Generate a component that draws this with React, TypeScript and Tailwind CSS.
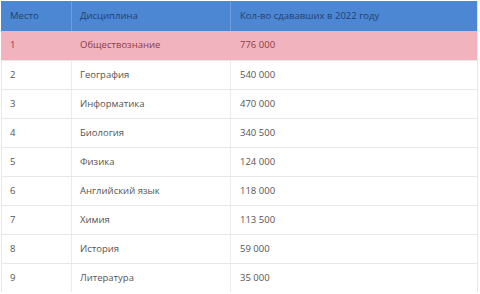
import React from 'react';

const rows: [string, string, string][] = [
  ['1', 'Обществознание', '776 000'],
  ['2', 'География', '540 000'],
  ['3', 'Информатика', '470 000'],
  ['4', 'Биология', '340 500'],
  ['5', 'Физика', '124 000'],
  ['6', 'Английский язык', '118 000'],
  ['7', 'Химия', '113 500'],
  ['8', 'История', '59 000'],
  ['9', 'Литература', '35 000'],
];

export default function App() {
  return (
    <div
      className="w-[480px] h-[294px] overflow-hidden bg-white pt-px pl-px"
      style={{ fontFamily: '"Open Sans", "Noto Sans", sans-serif' }}
    >
      <div className="w-[477px] border-r border-[#e6e6e6]">
        {/* Header */}
        <div className="flex h-[30px] bg-[#4c87d3] text-[9.5px] text-[#26406e]">
          <div className="w-[71px] flex items-center pl-[9px] border-r border-[#6d9fe0]">Место</div>
          <div className="w-[159px] flex items-center pl-[8px] border-r border-[#6d9fe0]">Дисциплина</div>
          <div className="flex-1 flex items-center pl-[9px]">Кол-во сдававших в 2022 году</div>
        </div>

        {rows.map(([place, subject, count], i) => {
          const hl = i === 0;
          return (
            <div
              key={place}
              className={
                hl
                  ? 'flex h-[29px] bg-[#f1b3bd] text-[9.5px] text-[#8c3b48]'
                  : 'flex h-[29px] border-t border-l border-[#e8e8e8] text-[9.5px] text-[#555]'
              }
            >
              <div className={hl ? 'w-[71px] flex items-center pl-[9px]' : 'w-[70px] flex items-center pl-[8px] border-r border-[#ececec]'}>
                {place}
              </div>
              <div className={hl ? 'w-[159px] flex items-center pl-[8px]' : 'w-[159px] flex items-center pl-[8px] border-r border-[#ececec]'}>
                {subject}
              </div>
              <div className="flex-1 flex items-center pl-[9px]">{count}</div>
            </div>
          );
        })}
      </div>
    </div>
  );
}
